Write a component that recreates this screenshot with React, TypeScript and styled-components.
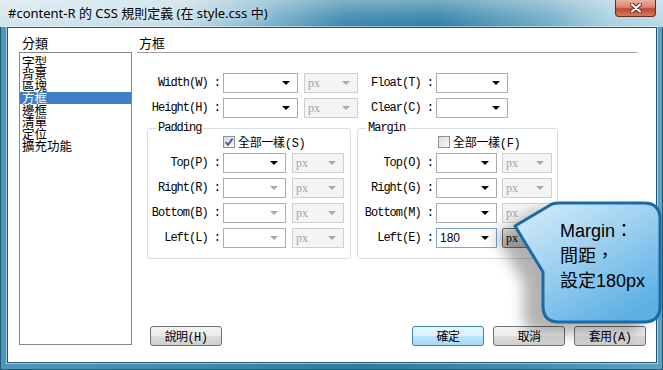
import React from 'react';
import styled, { createGlobalStyle } from 'styled-components';

const CJK = `"Noto Sans CJK TC", "Noto Sans", sans-serif`;
const MONO = `"Liberation Mono", "Noto Sans CJK TC", monospace`;

const GlobalStyle = createGlobalStyle`
  html, body {
    margin: 0;
    padding: 0;
  }
  body {
    width: 663px;
    height: 370px;
    overflow: hidden;
    background: #fff;
  }
`;

const Window = styled.div`
  position: relative;
  width: 663px;
  height: 370px;
  box-sizing: border-box;
  padding: 0 6px 7px 7px;
  display: flex;
  flex-direction: column;
  background: linear-gradient(90deg, #4c98ba 0%, #3a8bb0 30%, #2b7ca2 55%, #3f8eb2 80%, #5aa3c2 100%);
  box-shadow: inset 0 0 0 1px #1f5a78;
`;

const TitleBar = styled.div`
  height: 27px;
  display: flex;
  align-items: flex-start;
  background:
    linear-gradient(180deg, rgba(255, 255, 255, 0.35) 0%, rgba(255, 255, 255, 0.1) 60%, rgba(255, 255, 255, 0) 100%),
    linear-gradient(90deg, #d2e5ed 0%, #c0dbe7 28%, #7fb4cc 40%, #3a88ac 52%, #2f80a5 66%, #6eaac5 82%, #a9d1e1 92%, #b6d8e5 100%);
  margin: 0 -6px 0 -7px;
  padding: 0 7px 0 8px;
`;

const Title = styled.div`
  font: 13px "Noto Sans", "Noto Sans CJK TC", sans-serif;
  color: #000;
  line-height: 27px;
  text-shadow: 0 0 6px rgba(255, 255, 255, 0.9);
`;

const CloseButton = styled.div`
  margin-left: auto;
  width: 41px;
  height: 17px;
  box-sizing: border-box;
  border: 1px solid #6a2a1f;
  border-top: none;
  border-radius: 0 0 4px 4px;
  background: linear-gradient(180deg, #eab2a4 0%, #d98470 45%, #c24a30 55%, #d7765c 100%);
  display: flex;
  align-items: center;
  justify-content: center;
`;

const Body = styled.div`
  flex: 1;
  background: #fff;
  border: 1px solid #2c5468;
  box-shadow: 0 0 0 1px rgba(255, 255, 255, 0.5);
  display: grid;
  grid-template-columns: 113px 1fr;
  column-gap: 5px;
  padding: 8px 10px 17px 11px;
`;

const LeftColumn = styled.div`
  display: flex;
  flex-direction: column;
`;

const CategoryHeader = styled.div`
  height: 16px;
  padding-left: 3px;
  font: 13px ${CJK};
  line-height: 14px;
  color: #000;
`;

const CategoryList = styled.div`
  flex: 1;
  border: 1px solid #828790;
  padding-top: 3px;
`;

const CategoryItem = styled.div<{ $selected?: boolean }>`
  height: 12px;
  padding-left: 2px;
  font: 12.5px ${CJK};
  line-height: 12px;
  color: ${p => (p.$selected ? '#fff' : '#000')};
  background: ${p => (p.$selected ? '#3d80c8' : 'transparent')};
`;

const RightColumn = styled.div`
  display: flex;
  flex-direction: column;
`;

const Heading = styled.div`
  height: 16px;
  margin-right: 9px;
  padding-left: 2px;
  border-bottom: 1px solid #a0a0a0;
  font: 13px ${CJK};
  line-height: 14px;
  color: #000;
`;

const TopFields = styled.div`
  margin-top: 20px;
  display: flex;
  flex-direction: column;
  gap: 5px;
`;

const Row = styled.div`
  display: flex;
  align-items: center;
  height: 20px;
`;

const FieldLabel = styled.div<{ $w: number }>`
  width: ${p => p.$w}px;
  flex: none;
  box-sizing: border-box;
  padding-right: 3px;
  text-align: right;
  font: 12px ${MONO};
  letter-spacing: -1px;
  white-space: nowrap;
  color: #000;
`;

const Combo = styled.div<{ $w: number; $disabled?: boolean; $focus?: boolean; $ml?: number }>`
  width: ${p => p.$w}px;
  margin-left: ${p => p.$ml ?? 0}px;
  height: 20px;
  flex: none;
  box-sizing: border-box;
  border: 1px solid ${p => (p.$disabled ? '#cfcfcf' : p.$focus ? '#7aa6d2' : '#abadb3')};
  background: ${p => (p.$disabled ? '#f4f4f4' : '#fff')};
  display: flex;
  align-items: center;
  justify-content: space-between;
  padding: 0 7px 0 3px;
  font: 12px "Liberation Serif", serif;
  color: ${p => (p.$disabled ? '#a3a3a3' : '#000')};
`;

const UnitButton = styled.div<{ $w: number; $ml?: number }>`
  width: ${p => p.$w}px;
  margin-left: ${p => p.$ml ?? 0}px;
  height: 20px;
  flex: none;
  box-sizing: border-box;
  border: 1px solid #707070;
  border-radius: 2px;
  background: linear-gradient(180deg, #f3f3f3 0%, #ebebeb 50%, #dcdcdc 50%, #cfcfcf 100%);
  display: flex;
  align-items: center;
  justify-content: space-between;
  padding: 0 7px 0 3px;
  font: 12px "Liberation Serif", serif;
  color: #000;
`;

const ComboValue = styled.span<{ $sans?: boolean }>`
  font-family: ${p => (p.$sans ? '"Liberation Sans", sans-serif' : 'inherit')};
`;

const Arrow = styled.span<{ $muted?: boolean }>`
  width: 0;
  height: 0;
  border-left: 4px solid transparent;
  border-right: 4px solid transparent;
  border-top: 4px solid ${p => (p.$muted ? '#a8a8a8' : '#000')};
`;

const FieldsetRow = styled.div`
  display: flex;
  gap: 6px;
  margin: 4px 0 0 10px;
`;

const Group = styled.fieldset<{ $w: number }>`
  width: ${p => p.$w}px;
  box-sizing: border-box;
  margin: 0;
  padding: 0 5px 10px 0;
  min-width: 0;
  border: 1px solid #d5dfe5;
  border-radius: 3px;
`;

const GroupLegend = styled.legend`
  margin-left: 8px;
  padding: 0 2px;
  font: 12px ${MONO};
  letter-spacing: -1px;
  line-height: 12px;
  color: #000;
`;

const CheckRow = styled.div<{ $indent: number }>`
  height: 14px;
  margin-top: 1px;
  padding-left: ${p => p.$indent}px;
  display: flex;
  align-items: center;
  gap: 3px;
  font: 12px ${MONO};
  letter-spacing: -0.3px;
  color: #000;
`;

const CheckBox = styled.span`
  width: 12px;
  height: 12px;
  box-sizing: border-box;
  border: 1px solid #8e8f8f;
  background: linear-gradient(135deg, #dcdcdc 0%, #f6f6f6 100%);
  display: flex;
  align-items: center;
  justify-content: center;
`;

const GroupRows = styled.div`
  margin-top: 4px;
  display: flex;
  flex-direction: column;
  gap: 5px;
`;

const ButtonBar = styled.div`
  margin-top: auto;
  display: flex;
  gap: 9px;
  padding-left: 13px;
  margin-bottom: -1px;
`;

const Button = styled.div<{ $primary?: boolean; $push?: boolean }>`
  width: 72px;
  height: 20px;
  box-sizing: border-box;
  margin-left: ${p => (p.$push ? 'auto' : '0')};
  border: 1px solid ${p => (p.$primary ? '#3c7fb1' : '#707070')};
  border-radius: 3px;
  background: ${p =>
    p.$primary
      ? 'linear-gradient(180deg, #eaf6fd 0%, #d9f0fc 50%, #bee6fd 50%, #a7d9f5 100%)'
      : 'linear-gradient(180deg, #f3f3f3 0%, #ebebeb 50%, #dddddd 50%, #cfcfcf 100%)'};
  display: flex;
  align-items: center;
  justify-content: center;
  font: 12px ${MONO};
  letter-spacing: -0.6px;
  color: #000;
`;

const Callout = styled.div`
  position: absolute;
  left: 500px;
  top: 198px;
  width: 163px;
  height: 130px;
`;

const CalloutShape = styled.svg`
  position: absolute;
  inset: 0;
  overflow: visible;
  filter: drop-shadow(-18px 10px 7px rgba(0, 0, 0, 0.3));
`;

const CalloutText = styled.div`
  position: absolute;
  left: 60px;
  top: 21px;
  font: 18px "Liberation Sans", "Noto Sans CJK TC", sans-serif;
  line-height: 25px;
  color: #000;
  white-space: nowrap;
`;

type Field = { label: string; value?: string; enabled?: boolean; unitEnabled?: boolean; focus?: boolean };

const categories = ['字型', '背景', '區塊', '方框', '邊框', '清單', '定位', '擴充功能'];

const paddingFields: Field[] = [
  { label: 'Top(P) :', enabled: true },
  { label: 'Right(R) :' },
  { label: 'Bottom(B) :' },
  { label: 'Left(L) :' },
];

const marginFields: Field[] = [
  { label: 'Top(O) :', enabled: true },
  { label: 'Right(G) :', enabled: true },
  { label: 'Bottom(M) :', enabled: true },
  { label: 'Left(E) :', enabled: true, value: '180', unitEnabled: true, focus: true },
];

const CloseIcon = () => (
  <svg width="12" height="10" viewBox="0 0 12 10">
    <path d="M2 1.5 L10 8.5 M10 1.5 L2 8.5" stroke="#5a2a22" strokeWidth="4" strokeLinecap="round" />
    <path d="M2 1.5 L10 8.5 M10 1.5 L2 8.5" stroke="#fff" strokeWidth="2.2" strokeLinecap="round" />
  </svg>
);

const CheckMark = () => (
  <svg width="10" height="10" viewBox="0 0 10 10">
    <path d="M1.5 5 L4 7.8 L8.6 1.6" stroke="#3b5a9a" strokeWidth="1.8" fill="none" />
  </svg>
);

const FieldRows: React.FC<{ fields: Field[]; labelW: number; selW: number; unitW: number; gap: number }> = ({
  fields,
  labelW,
  selW,
  unitW,
  gap,
}) => (
  <GroupRows>
    {fields.map(f => (
      <Row key={f.label}>
        <FieldLabel $w={labelW}>{f.label}</FieldLabel>
        <Combo $w={selW} $focus={f.focus}>
          <ComboValue $sans>{f.value ?? ''}</ComboValue>
          <Arrow $muted={!f.enabled} />
        </Combo>
        {f.unitEnabled ? (
          <UnitButton $w={unitW} $ml={gap}>
            <span>px</span>
            <Arrow />
          </UnitButton>
        ) : (
          <Combo $w={unitW} $ml={gap} $disabled>
            <span>px</span>
            <Arrow $muted />
          </Combo>
        )}
      </Row>
    ))}
  </GroupRows>
);

const App: React.FC = () => (
  <>
    <GlobalStyle />
    <Window>
      <TitleBar>
        <Title>#content-R 的 CSS 規則定義 (在 style.css 中)</Title>
        <CloseButton>
          <CloseIcon />
        </CloseButton>
      </TitleBar>
      <Body>
        <LeftColumn>
          <CategoryHeader>分類</CategoryHeader>
          <CategoryList>
            {categories.map(c => (
              <CategoryItem key={c} $selected={c === '方框'}>
                {c}
              </CategoryItem>
            ))}
          </CategoryList>
        </LeftColumn>
        <RightColumn>
          <Heading>方框</Heading>
          <TopFields>
            <Row>
              <FieldLabel $w={86}>Width(W) :</FieldLabel>
              <Combo $w={75}>
                <span />
                <Arrow />
              </Combo>
              <Combo $w={54} $ml={6} $disabled>
                <span>px</span>
                <Arrow $muted />
              </Combo>
              <FieldLabel $w={78}>Float(T) :</FieldLabel>
              <Combo $w={72}>
                <span />
                <Arrow />
              </Combo>
            </Row>
            <Row>
              <FieldLabel $w={86}>Height(H) :</FieldLabel>
              <Combo $w={75}>
                <span />
                <Arrow />
              </Combo>
              <Combo $w={54} $ml={6} $disabled>
                <span>px</span>
                <Arrow $muted />
              </Combo>
              <FieldLabel $w={78}>Clear(C) :</FieldLabel>
              <Combo $w={72}>
                <span />
                <Arrow />
              </Combo>
            </Row>
          </TopFields>
          <FieldsetRow>
            <Group $w={204}>
              <GroupLegend>Padding</GroupLegend>
              <CheckRow $indent={75}>
                <CheckBox>
                  <CheckMark />
                </CheckBox>
                全部一樣(S)
              </CheckRow>
              <FieldRows fields={paddingFields} labelW={75} selW={63} unitW={52} gap={6} />
            </Group>
            <Group $w={201}>
              <GroupLegend>Margin</GroupLegend>
              <CheckRow $indent={80}>
                <CheckBox />
                全部一樣(F)
              </CheckRow>
              <FieldRows fields={marginFields} labelW={78} selW={61} unitW={50} gap={5} />
            </Group>
          </FieldsetRow>
          <ButtonBar>
            <Button>說明(H)</Button>
            <Button $primary $push>
              確定
            </Button>
            <Button>取消</Button>
            <Button>套用(A)</Button>
          </ButtonBar>
        </RightColumn>
      </Body>
      <Callout>
        <CalloutShape width="163" height="130" viewBox="0 0 163 130">
          <defs>
            <linearGradient id="bubbleFill" x1="0" y1="0" x2="0.7" y2="1">
              <stop offset="0" stopColor="#d8eefb" />
              <stop offset="0.45" stopColor="#a2d3f1" />
              <stop offset="1" stopColor="#5eb0e4" />
            </linearGradient>
          </defs>
          <path
            d="M15 28 L52 6 Q55 5 60 5 H144 Q160 5 160 21 V108 Q160 124 144 124 H59 Q43 124 43 108 V74 Z"
            fill="url(#bubbleFill)"
            stroke="#1b6aa5"
            strokeWidth="3"
            strokeLinejoin="round"
          />
        </CalloutShape>
        <CalloutText>
          Margin：
          <br />
          間距，
          <br />
          設定180px
        </CalloutText>
      </Callout>
    </Window>
  </>
);

export default App;
